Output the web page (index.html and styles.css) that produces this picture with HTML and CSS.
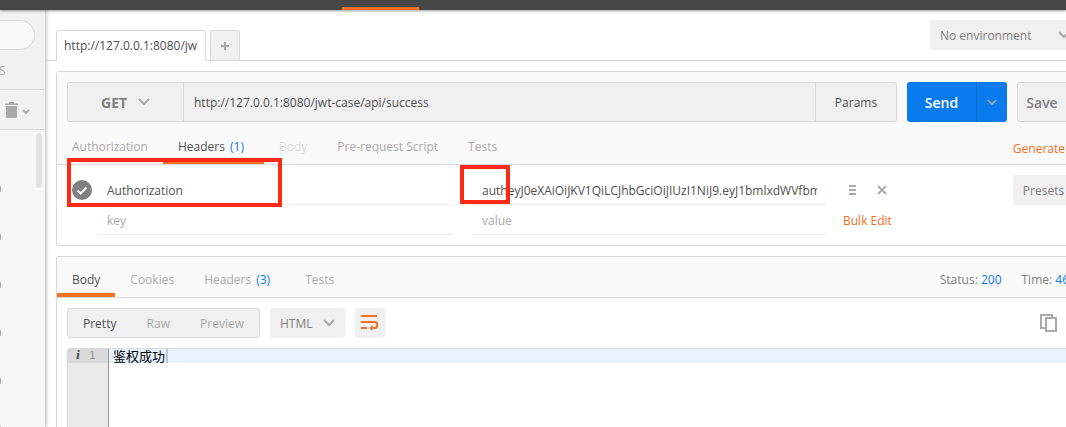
FILE: index.html
```
<!DOCTYPE html>
<html lang="en">
<head>
<meta charset="utf-8">
<title>API client</title>
<link rel="stylesheet" href="styles.css">
</head>
<body>
<div class="app">
  <header class="topbar"><span class="topbar-active"></span></header>
  <div class="workspace">
    <aside class="sidebar">
      <div class="side-head">
        <input class="side-search" type="text" aria-label="Filter">
        <span class="side-tab">S</span>
      </div>
      <div class="side-tools">
        <button class="icon-button" aria-label="Delete">
          <svg width="25" height="16" viewBox="0 0 25 16"><path fill="#aaa" d="M0 1.500h4V0h5v1.500h4V3H0zM1 4h11v10.500q0 1.500-1.500 1.500h-8Q1 16 1 14.500z"/><path d="M18 8l3 3 3-3" fill="none" stroke="#aaa" stroke-width="2"/></svg>
        </button>
      </div>
      <div class="side-list">
        <i class="side-mark"></i><i class="side-mark"></i><i class="side-mark"></i><i class="side-mark"></i><i class="side-mark"></i><i class="side-mark"></i>
        <span class="side-scroll"></span>
      </div>
    </aside>
    <main class="main">
      <div class="tabbar">
        <button class="doc-tab">http://127.0.0.1:8080/jw</button>
        <button class="add-tab" aria-label="New tab"><svg width="8" height="8" viewBox="0 0 8 8"><path d="M4 0v8M0 4h8" stroke="#aaa" stroke-width="2"/></svg></button>
        <div class="select environment">
          <select aria-label="Environment"><option>No environment</option></select>
          <svg class="chevron" width="12" height="8" viewBox="0 0 12 8"><path d="M1 1l5 5 5-5"/></svg>
        </div>
      </div>

      <section class="panel request">
        <div class="panel-head">
          <div class="url-row">
            <div class="url-group">
              <div class="select method">
                <select aria-label="Method"><option>GET</option></select>
                <svg class="chevron" width="12" height="8" viewBox="0 0 12 8"><path d="M1 1l5 5 5-5"/></svg>
              </div>
              <input class="url" type="text" aria-label="Request URL" value="http://127.0.0.1:8080/jwt-case/api/success">
              <button class="params">Params</button>
            </div>
            <div class="send-group">
              <button class="send">Send</button>
              <button class="send-more" aria-label="Send options"><svg class="chevron" width="10" height="7" viewBox="0 0 12 8"><path d="M1 1l5 5 5-5"/></svg></button>
            </div>
            <button class="save">Save</button>
          </div>
          <nav class="tabs">
            <button class="tab">Authorization</button>
            <button class="tab active">Headers <span class="count">(1)</span></button>
            <button class="tab disabled" disabled>Body</button>
            <button class="tab">Pre-request Script</button>
            <button class="tab">Tests</button>
            <a class="generate" href="#">Generate</a>
          </nav>
        </div>
        <div class="headers-body">
          <div class="kv-row">
            <label class="toggle"><input type="checkbox" checked aria-label="Enabled"><svg width="20" height="20" viewBox="0 0 20 20"><circle cx="10" cy="10" r="10" fill="#808080"/><path d="M5.500 10.500l3 3 6-6" fill="none" stroke="#fff" stroke-width="2.200"/></svg></label>
            <div class="kv-cell"><input class="kv" type="text" aria-label="Header key" value="Authorization"><span class="mark mark-key"></span></div>
            <div class="kv-cell"><input class="kv" type="text" aria-label="Header value" value="autheyJ0eXAiOiJKV1QiLCJhbGciOiJIUzI1NiJ9.eyJ1bmlxdWVfbmFtZSI6"><span class="mark mark-value"></span></div>
            <div class="kv-actions">
              <button class="icon-button" aria-label="Reorder"><svg width="7" height="10" viewBox="0 0 7 10"><path d="M0 1h7M0 5h7M0 9h7" stroke="#aaa" stroke-width="2"/></svg></button>
              <button class="icon-button" aria-label="Remove"><svg width="10" height="10" viewBox="0 0 10 10"><path d="M1 1l8 8M9 1l-8 8" stroke="#aaa" stroke-width="2"/></svg></button>
              <button class="presets">Presets</button>
            </div>
          </div>
          <div class="kv-row">
            <span class="toggle"></span>
            <div class="kv-cell"><input class="kv" type="text" aria-label="New header key" placeholder="key"></div>
            <div class="kv-cell"><input class="kv" type="text" aria-label="New header value" placeholder="value"></div>
            <div class="kv-actions bulk-cell"><a class="bulk" href="#">Bulk Edit</a></div>
          </div>
        </div>
      </section>

      <section class="panel response">
        <div class="panel-head">
          <nav class="tabs">
            <button class="tab active">Body</button>
            <button class="tab">Cookies</button>
            <button class="tab">Headers <span class="count">(3)</span></button>
            <button class="tab">Tests</button>
            <div class="status"><span>Status: <b>200</b></span><span>Time: <b>46</b></span></div>
          </nav>
        </div>
        <div class="view-row">
          <div class="segmented">
            <button class="on">Pretty</button><button>Raw</button><button>Preview</button>
          </div>
          <div class="select language">
            <select aria-label="Language"><option>HTML</option></select>
            <svg class="chevron" width="12" height="8" viewBox="0 0 12 8"><path d="M1 1l5 5 5-5"/></svg>
          </div>
          <button class="wrap" aria-label="Wrap lines"><svg width="18" height="16" viewBox="0 0 18 16"><path d="M0 1h16M0 7h13.500a2.800 3 0 0 1 0 6H11M0 13h6" fill="none" stroke="#f47023" stroke-width="2"/><path d="M8.500 13l3-3v6z" fill="#f47023"/></svg></button>
          <button class="icon-button copy" aria-label="Copy"><svg width="17" height="18" viewBox="0 0 17 18"><path d="M5 14H1V1h11v2" fill="none" stroke="#aaa" stroke-width="2"/><path d="M6 4h10v13H6z" fill="#fff" stroke="#aaa" stroke-width="2"/></svg></button>
        </div>
        <div class="editor">
          <div class="gutter"><div class="gutter-line"><i>i</i><span>1</span></div></div>
          <div class="code"><div class="code-line">鉴权成功<span class="caret"></span></div></div>
        </div>
      </section>
    </main>
  </div>
</div>
</body>
</html>
```
FILE: styles.css
```
* { box-sizing: border-box; }
body {
  margin: 0;
  background: #fff;
  color: #505050;
  font: 12px/18px "Open Sans", "Noto Sans CJK SC", sans-serif;
}
button, input, select {
  margin: 0;
  padding: 0;
  border: 0;
  border-radius: 0;
  background: none;
  color: inherit;
  font: inherit;
  outline: 0;
  appearance: none;
}
button { white-space: nowrap; }
a { color: #f47023; text-decoration: none; white-space: nowrap; }
svg { display: block; }
.app { display: flex; flex-direction: column; height: 100vh; overflow: hidden; }

.topbar {
  z-index: 1;
  flex: none;
  display: flex;
  align-items: flex-end;
  height: 10px;
  padding-left: 342px;
  background: #464646;
  box-shadow: 0 1px 3px rgba(0, 0, 0, 0.4);
}
.topbar-active { width: 77px; height: 3px; background: #f47023; }
.workspace { flex: 1; display: flex; min-height: 0; }

.sidebar {
  flex: none;
  display: flex;
  flex-direction: column;
  width: 46px;
  border-right: 1px solid #d4d4d4;
  background: #f7f7f7;
  box-shadow: 1px 0 3px rgba(0, 0, 0, 0.2);
}
.side-head { flex: none; height: 80px; padding-top: 10px; border-bottom: 1px solid #d9d9d9; background: #f2f2f2; }
.side-search {
  display: block;
  width: 35px;
  height: 30px;
  border: 1px solid #d9d9d9;
  border-left: 0;
  border-radius: 0 15px 15px 0;
  background: #fafafa;
}
.side-tab { display: block; margin: 12px 0 0 -1px; color: #aaa; }
.side-tools { flex: none; display: flex; align-items: center; height: 40px; padding-left: 5px; border-bottom: 1px solid #d9d9d9; background: #f2f2f2; }
.side-list { position: relative; flex: 1; display: flex; flex-direction: column; gap: 42px; min-height: 0; padding-top: 56px; }
.side-mark { flex: none; width: 1px; height: 6px; background: #b0b0b0; }
.side-scroll { position: absolute; top: 3px; right: 3px; width: 6px; height: 55px; border-radius: 3px; background: #e2e2e2; }

.main { flex: 1; min-width: 0; display: flex; flex-direction: column; }
.tabbar { display: flex; align-items: flex-end; gap: 4px; height: 51px; flex: none; padding-left: 10px; overflow: hidden; box-shadow: inset 0 -1px #d9d9d9; }
.doc-tab {
  width: 150px;
  height: 31px;
  padding: 0 7px;
  border: 1px solid #d9d9d9;
  border-bottom: 0;
  border-radius: 3px 3px 0 0;
  background: #fff;
  text-align: left;
}
.add-tab {
  display: flex;
  align-items: center;
  justify-content: center;
  width: 30px;
  height: 31px;
  border: 1px solid #d9d9d9;
  border-radius: 3px 3px 0 0;
  background: #f0f0f0;
}
.select { position: relative; display: flex; }
.select select { width: 100%; padding-top: 2px; }
.chevron { fill: none; stroke: #aaa; stroke-width: 2; }
.select .chevron { position: absolute; top: 50%; margin-top: -4px; pointer-events: none; }
.environment { align-self: flex-start; width: 136px; height: 30px; margin: 10px 0 0 auto; overflow: hidden; border-radius: 3px 0 0 3px; background: #f0f0f0; color: #808080; }
.environment select { padding-left: 10px; }
.environment .chevron { right: -4px; }

.panel { margin-left: 10px; border: 1px solid #d9d9d9; border-right: 0; border-radius: 3px 0 0 3px; }
.request { flex: none; margin-top: 10px; }
.panel-head { border-bottom: 1px solid #d9d9d9; background: #fafafa; }
.url-row { display: flex; gap: 10px; padding: 10px 0 0 10px; }
.url-group { flex: 1; display: flex; height: 40px; border: 1px solid #d9d9d9; border-radius: 3px; background: #f0f0f0; }
.method { width: 116px; border-right: 1px solid #d9d9d9; color: #808080; font-size: 14px; font-weight: 700; }
.method select { padding-left: 33px; }
.method .chevron { right: 33px; }
.url { flex: 1; min-width: 0; padding: 2px 10px 0; }
.params { width: 81px; padding-top: 2px; border-left: 1px solid #d9d9d9; }
.send-group { display: flex; width: 100px; height: 40px; border-radius: 3px; background: #097bed; color: #fff; }
.send { flex: 1; padding-top: 2px; font-size: 14px; font-weight: 600; }
.send-more { display: flex; align-items: center; justify-content: center; width: 31px; border-left: 1px solid #0a69c8; }
.save { width: 49px; height: 40px; padding-top: 2px; border: 1px solid #d9d9d9; border-right: 0; border-radius: 3px 0 0 3px; background: #f0f0f0; color: #808080; font-size: 14px; font-weight: 600; }

.tabs { display: flex; height: 42px; }
.response .tabs { height: 40px; }
.tab { padding: 12px 15px 0; border-bottom: 4px solid transparent; color: #aaa; }
.response .tab { padding-top: 10px; }
.tab.active { border-color: #f47023; color: #505050; }
.tab.disabled { color: #d9d9d9; }
.count { margin-right: 5px; margin-left: 2px; color: #097bed; }
.generate { align-self: center; margin: 12px 1px 0 auto; }

.headers-body { padding: 10px 0; }
.kv-row { display: flex; height: 30px; }
.toggle { flex: none; width: 40px; padding: 5px 0 0 15px; }
.toggle input { position: absolute; opacity: 0; }
.kv-cell { position: relative; flex: 1; margin-right: 20px; padding: 0 10px; border-bottom: 1px solid #ececec; }
.kv-cell + .kv-cell { margin-right: 0; }
.kv { display: block; width: 100%; height: 29px; padding-top: 1px; }
.kv::placeholder { color: #aaa; opacity: 1; }
.mark { position: absolute; border: 4px solid #ff2a14; pointer-events: none; }
.mark-key { top: -17px; left: -30px; width: 215px; height: 49px; }
.mark-value { top: -10px; left: -12px; width: 50px; height: 39px; }
.kv-actions { flex: none; display: flex; align-items: center; gap: 21px; width: 239px; padding-left: 22px; }
.presets { width: 53px; height: 30px; margin-left: auto; padding: 2px 0 0 8px; border-radius: 3px 0 0 3px; background: #f0f0f0; color: #808080; }
.bulk-cell { padding: 2px 0 0 16px; }

.response { flex: 1; display: flex; flex-direction: column; min-height: 0; margin-top: 10px; border-bottom: 0; border-bottom-left-radius: 0; }
.status { display: flex; gap: 20px; margin: 0 -3px 0 auto; padding-top: 14px; color: #808080; white-space: nowrap; }
.status b { color: #097bed; font-weight: 400; }
.view-row { display: flex; align-items: center; gap: 10px; padding: 10px 9px 10px 10px; }
.segmented { display: flex; width: 193px; height: 30px; padding: 2px 15px 0; justify-content: space-between; border: 1px solid #d9d9d9; border-radius: 3px; background: #f0f0f0; color: #aaa; }
.segmented .on { color: #505050; }
.language { width: 75px; height: 30px; border-radius: 3px; background: #f0f0f0; color: #808080; }
.language select { padding-left: 10px; }
.language .chevron { right: 10px; }
.wrap { display: flex; align-items: center; justify-content: center; width: 30px; height: 30px; border-radius: 3px; background: #f0f0f0; }
.copy { margin-left: auto; }

.editor { flex: 1; display: flex; margin-left: 10px; border-top: 1px solid #d9d9d9; border-left: 1px solid #d9d9d9; border-top-left-radius: 3px; font: 12px/14px "DejaVu Sans Mono", "Noto Sans CJK SC", monospace; }
.gutter { width: 41px; border-right: 1px solid #999; background: #ebebeb; }
.gutter-line { display: flex; gap: 7px; height: 14px; padding-left: 8px; background: #dadada; color: #999; font-size: 11px; }
.gutter-line i { width: 6px; color: #505050; font: italic 700 11px/14px "DejaVu Serif", serif; }
.code { flex: 1; color: #000; }
.code-line { display: flex; height: 14px; padding-left: 4px; background: #e8f2ff; font-family: "Noto Sans CJK SC", sans-serif; font-size: 13px; }
.caret { width: 2px; margin-left: 1px; background: #bfc5cc; }
```
